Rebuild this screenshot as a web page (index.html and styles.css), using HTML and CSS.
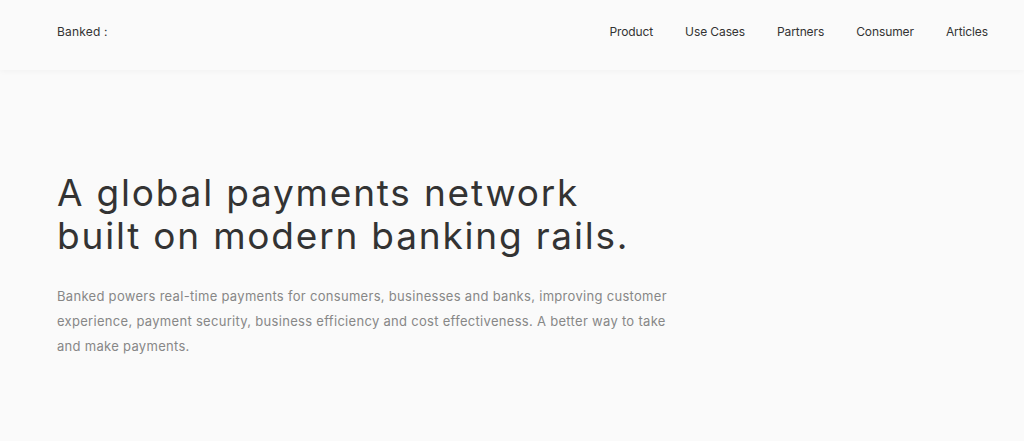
FILE: index.html
```html
<!DOCTYPE html>
<html lang="en">
<head>
<meta charset="utf-8">
<title>Banked</title>
<link rel="stylesheet" href="styles.css">
</head>
<body>
<header class="header">
  <div class="logo">Banked :</div>
  <nav class="nav">
    <a href="#">Product</a>
    <a href="#">Use Cases</a>
    <a href="#">Partners</a>
    <a href="#">Consumer</a>
    <a href="#">Articles</a>
  </nav>
</header>
<main class="hero">
  <h1 class="title">A global payments network<br>built on modern banking rails.</h1>
  <p class="lead">Banked powers real-time payments for consumers, businesses and banks, improving customer experience, payment security, business efficiency and cost effectiveness. A better way to take and make payments.</p>
</main>
</body>
</html>
```
FILE: styles.css
```css
html, body {
  margin: 0;
  padding: 0;
  background: #fafafa;
  font-family: "Inter", "Liberation Sans", sans-serif;
  color: #333;
}
.header {
  height: 70px;
  box-sizing: border-box;
  display: flex;
  align-items: flex-start;
  justify-content: space-between;
  padding: 24px 36px 0 57px;
  background: #fafafa;
  box-shadow: 0 1px 6px rgba(0,0,0,0.04);
}
.logo {
  font-size: 12px;
  line-height: 16px;
  color: #333;
  letter-spacing: 0.2px;
}
.nav {
  display: flex;
  gap: 32px;
}
.nav a {
  font-size: 12px;
  line-height: 16px;
  color: #333;
  text-decoration: none;
  letter-spacing: -0.1px;
}
.hero {
  padding: 101px 57px 0;
}
.title {
  margin: 0;
  font-size: 37px;
  font-weight: 400;
  line-height: 43px;
  letter-spacing: 1.8px;
  color: #333;
}
.lead {
  margin: 27px 0 0;
  max-width: 620px;
  font-size: 13px;
  line-height: 25px;
  color: #878787;
  letter-spacing: 0.3px;
}
```
